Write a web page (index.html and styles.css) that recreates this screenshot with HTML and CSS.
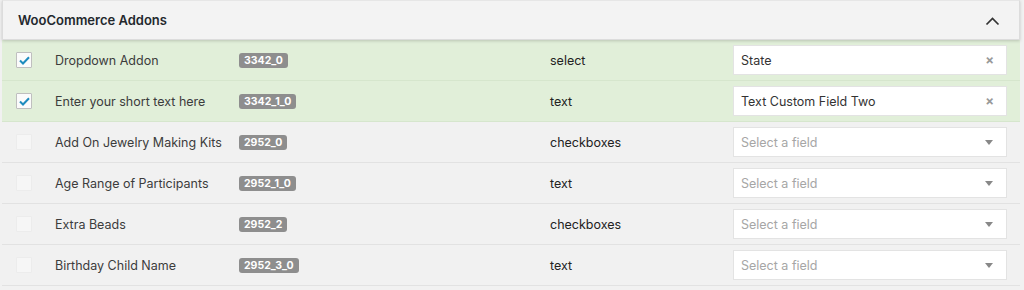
FILE: index.html
```html
<!DOCTYPE html>
<html lang="en">
<head>
    <meta charset="UTF-8">
    <title>WooCommerce Addons</title>
    <link rel="stylesheet" href="styles.css">
</head>
<body>

    <div class="panel">
        <!-- Panel header with collapse toggle -->
        <div class="panel-header">
            <span class="panel-title">WooCommerce Addons</span>
            <svg class="toggle" width="15" height="10" viewBox="0 0 15 10">
                <path d="M1.5 8.5 L7.5 2.5 L13.5 8.5" fill="none" stroke="#333" stroke-width="1.7"/>
            </svg>
        </div>

        <!-- Addon rows -->
        <div class="addon-row is-mapped">
            <span class="check is-checked">
                <svg width="11" height="9" viewBox="0 0 11 9"><path d="M1 4.5 L4 7.5 L10 1.2" fill="none" stroke="#1e8cbe" stroke-width="2"/></svg>
            </span>
            <span class="addon-name">Dropdown Addon</span>
            <span><span class="addon-id">3342_0</span></span>
            <span class="addon-type">select</span>
            <div class="field-select">
                <span>State</span>
                <span class="clear">&times;</span>
            </div>
        </div>

        <div class="addon-row is-mapped">
            <span class="check is-checked">
                <svg width="11" height="9" viewBox="0 0 11 9"><path d="M1 4.5 L4 7.5 L10 1.2" fill="none" stroke="#1e8cbe" stroke-width="2"/></svg>
            </span>
            <span class="addon-name">Enter your short text here</span>
            <span><span class="addon-id">3342_1_0</span></span>
            <span class="addon-type">text</span>
            <div class="field-select">
                <span>Text Custom Field Two</span>
                <span class="clear">&times;</span>
            </div>
        </div>

        <div class="addon-row">
            <span class="check"></span>
            <span class="addon-name">Add On Jewelry Making Kits</span>
            <span><span class="addon-id">2952_0</span></span>
            <span class="addon-type">checkboxes</span>
            <div class="field-select is-empty">
                <span>Select a field</span>
                <span class="arrow"></span>
            </div>
        </div>

        <div class="addon-row">
            <span class="check"></span>
            <span class="addon-name">Age Range of Participants</span>
            <span><span class="addon-id">2952_1_0</span></span>
            <span class="addon-type">text</span>
            <div class="field-select is-empty">
                <span>Select a field</span>
                <span class="arrow"></span>
            </div>
        </div>

        <div class="addon-row">
            <span class="check"></span>
            <span class="addon-name">Extra Beads</span>
            <span><span class="addon-id">2952_2</span></span>
            <span class="addon-type">checkboxes</span>
            <div class="field-select is-empty">
                <span>Select a field</span>
                <span class="arrow"></span>
            </div>
        </div>

        <div class="addon-row">
            <span class="check"></span>
            <span class="addon-name">Birthday Child Name</span>
            <span><span class="addon-id">2952_3_0</span></span>
            <span class="addon-type">text</span>
            <div class="field-select is-empty">
                <span>Select a field</span>
                <span class="arrow"></span>
            </div>
        </div>
    </div>

</body>
</html>
```

FILE: styles.css
```css
/* General Styles */
body {
    font-family: Inter, "Liberation Sans", sans-serif;
    margin: 0;
    padding: 0;
    background-color: #f1f1f1;
    color: #333;
    font-size: 12.5px;
}

.panel {
    margin: 0 4px 0 2px;
    background-color: #f1f1f1;
}

.panel-header {
    display: flex;
    align-items: center;
    justify-content: space-between;
    height: 38px;
    padding: 0 19px 0 15px;
    background-color: #f3f3f3;
    border: 1px solid #dcdcdc;
    border-top-color: #e6e6e6;
    box-shadow: 0 1px 3px rgba(0, 0, 0, 0.18);
    position: relative;
    z-index: 1;
}

.panel-title {
    font-weight: 600;
    color: #23282d;
    font-size: 13px;
}

.toggle {
    margin-top: 1px;
}

/* Addon rows */
.addon-row {
    display: grid;
    grid-template-columns: 39px 184px 311px 183px 274px;
    align-items: center;
    height: 40px;
    padding-left: 14px;
    border-bottom: 1px solid #e2e2e2;
}

.addon-row.is-mapped {
    background-color: #e1efd9;
    border-bottom-color: #d6e6cd;
}

.check {
    display: flex;
    align-items: center;
    justify-content: center;
    width: 14px;
    height: 14px;
    background-color: #f6f6f6;
    border: 1px solid #ececec;
    border-radius: 1px;
}

.check.is-checked {
    background-color: #fbfbfb;
    border-color: #bfbfbf;
}

.addon-name {
    color: #3c3c3c;
}

.addon-id {
    display: inline-block;
    padding: 0 5px;
    height: 15px;
    line-height: 15px;
    border-radius: 3px;
    background-color: #8e8e8e;
    color: #fff;
    font-size: 10.5px;
    font-weight: 700;
}

.addon-type {
    color: #222;
}

/* Select field */
.field-select {
    display: flex;
    align-items: center;
    justify-content: space-between;
    height: 28px;
    padding: 0 12px 0 7px;
    background-color: #fff;
    border: 1px solid #e3e3e3;
    color: #333;
}

.field-select.is-empty {
    color: #a6a6a6;
}

.clear {
    color: #999;
    font-weight: 700;
    font-size: 13px;
}

.arrow {
    width: 0;
    height: 0;
    border-left: 4px solid transparent;
    border-right: 4px solid transparent;
    border-top: 5px solid #888;
    margin-right: 1px;
}
```
